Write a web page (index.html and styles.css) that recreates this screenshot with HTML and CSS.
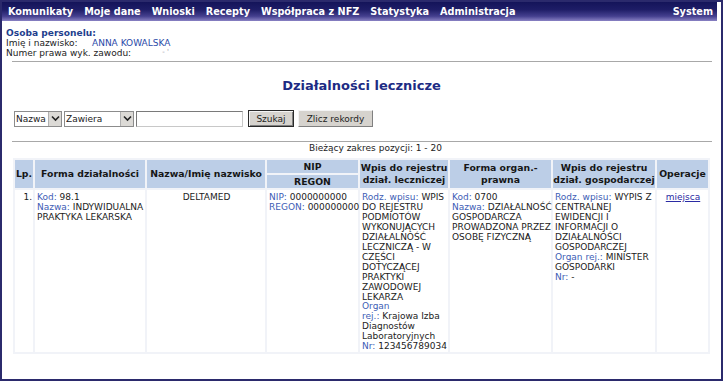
FILE: index.html
```html
<!DOCTYPE html>
<html lang="pl">
<head>
<meta charset="utf-8">
<title>Działalności lecznicze</title>
<link rel="stylesheet" href="styles.css">
</head>
<body>
<div class="frame">
  <nav class="menu">
    <div class="menu-left">
      <a>Komunikaty</a><a>Moje dane</a><a>Wnioski</a><a>Recepty</a><a>Współpraca z NFZ</a><a>Statystyka</a><a>Administracja</a>
    </div>
    <a>System</a>
  </nav>

  <section class="person">
    <div class="person-title">Osoba personelu:</div>
    <div class="person-row"><span class="plabel wide">Imię i nazwisko:</span><span class="pval">ANNA KOWALSKA</span></div>
    <div class="person-row"><span class="plabel">Numer prawa wyk. zawodu:</span><span class="pval faint">- '</span></div>
  </section>

  <hr class="rule">

  <h1 class="title">Działalności lecznicze</h1>

  <form class="search">
    <span class="sel s1"><select><option>Nazwa</option></select><span class="sel-btn"><svg width="9" height="7" viewBox="0 0 9 7"><path d="M1 1.5 L4.5 5 L8 1.5" fill="none" stroke="#222" stroke-width="1.6"/></svg></span></span>
    <span class="sel s2"><select><option>Zawiera</option></select><span class="sel-btn"><svg width="9" height="7" viewBox="0 0 9 7"><path d="M1 1.5 L4.5 5 L8 1.5" fill="none" stroke="#222" stroke-width="1.6"/></svg></span></span>
    <input class="txt" type="text">
    <button type="button" class="btn btn-default">Szukaj</button>
    <button type="button" class="btn btn-count">Zlicz rekordy</button>
  </form>

  <hr class="rule rule2">

  <div class="range">Bieżący zakres pozycji: 1 - 20</div>

  <table class="grid">
    <colgroup>
      <col class="c-lp"><col class="c-forma"><col class="c-nazwa"><col class="c-nip"><col class="c-wl"><col class="c-fo"><col class="c-wg"><col class="c-op">
    </colgroup>
    <thead>
      <tr>
        <th rowspan="2">Lp.</th>
        <th rowspan="2">Forma działalności</th>
        <th rowspan="2">Nazwa/Imię nazwisko</th>
        <th class="sub">NIP</th>
        <th rowspan="2">Wpis do rejestru<br>dział. leczniczej</th>
        <th rowspan="2">Forma organ.-<br>prawna</th>
        <th rowspan="2">Wpis do rejestru<br>dział. gospodarczej</th>
        <th rowspan="2">Operacje</th>
      </tr>
      <tr><th class="sub">REGON</th></tr>
    </thead>
    <tbody>
      <tr>
        <td class="num">1.</td>
        <td><span class="lbl">Kod:</span> 98.1<br><span class="lbl">Nazwa:</span> INDYWIDUALNA<br>PRAKTYKA LEKARSKA</td>
        <td class="center">DELTAMED</td>
        <td><span class="lbl">NIP:</span> 0000000000<br><span class="lbl">REGON:</span> 000000000</td>
        <td><span class="lbl">Rodz. wpisu:</span> WPIS<br>DO REJESTRU<br>PODMIOTÓW<br>WYKONUJĄCYCH<br>DZIAŁALNOŚĆ<br>LECZNICZĄ - W<br>CZĘŚCI<br>DOTYCZĄCEJ<br>PRAKTYKI<br>ZAWODOWEJ<br>LEKARZA<br><span class="lbl">Organ<br>rej.:</span> Krajowa Izba<br>Diagnostów<br>Laboratoryjnych<br><span class="lbl">Nr:</span> 123456789034</td>
        <td><span class="lbl">Kod:</span> 0700<br><span class="lbl">Nazwa:</span> DZIAŁALNOŚĆ<br>GOSPODARCZA<br>PROWADZONA PRZEZ<br>OSOBĘ FIZYCZNĄ</td>
        <td><span class="lbl">Rodz. wpisu:</span> WYPIS Z<br>CENTRALNEJ<br>EWIDENCJI I<br>INFORMACJI O<br>DZIAŁALNOŚCI<br>GOSPODARCZEJ<br><span class="lbl">Organ rej.:</span> MINISTER<br>GOSPODARKI<br><span class="lbl">Nr:</span> -</td>
        <td class="center"><a class="link">miejsca</a></td>
      </tr>
    </tbody>
  </table>
</div>
</body>
</html>
```

FILE: styles.css
```css
html, body {
  margin: 0;
  padding: 0;
  background: #fff;
}

.frame {
  width: 723px;
  height: 381px;
  box-sizing: border-box;
  border: 2px solid #2b2a6c;
  background: #fff;
  font-family: "DejaVu Sans", Verdana, sans-serif;
  color: #222;
  overflow: hidden;
}

/* top menu */
.menu {
  display: flex;
  justify-content: space-between;
  align-items: center;
  height: 19px;
  margin-right: 4px;
  padding: 0 4px 0 6px;
  background: linear-gradient(to bottom, #14145a 0%, #1e1d66 40%, #45408f 75%, #8a82c4 100%);
  color: #fff;
  font-weight: bold;
  font-size: 9.7px;
}
.menu-left {
  display: flex;
  gap: 11px;
}
.menu a {
  color: #fff;
  white-space: nowrap;
}

/* person */
.person {
  margin: 7px 0 0 4px;
  font-size: 9px;
  line-height: 10px;
}
.person-title {
  font-weight: bold;
  font-size: 9.1px;
  color: #1f3f8e;
}
.person-row {
  display: flex;
}
.plabel {
  color: #222;
  white-space: nowrap;
}
.plabel.wide {
  width: 86px;
}
.pval {
  color: #2a4aa8;
}
.pval.faint {
  margin-left: 31px;
  color: #9a9aa8;
  font-size: 7px;
  line-height: 8px;
}

.rule {
  height: 0;
  border: 0;
  border-top: 1px solid #a8a8a8;
  margin: 3px 9px 0 10px;
}
.rule2 {
  margin-top: 14px;
}

.title {
  margin: 16px 0 0 0;
  text-align: center;
  font-size: 13px;
  line-height: 16px;
  font-weight: bold;
  color: #1d2b84;
}

/* search */
.search {
  display: flex;
  align-items: center;
  margin: 16px 0 0 12px;
  height: 17px;
  font-size: 9px;
}
.sel {
  display: flex;
  align-items: stretch;
  height: 16px;
  box-sizing: border-box;
  border: 1px solid #8c8c8c;
  background: #fff;
  margin-right: 2px;
}
.sel select {
  appearance: none;
  -webkit-appearance: none;
  border: 0;
  background: transparent;
  font: inherit;
  color: #222;
  padding: 0 0 0 1px;
  margin: 0;
  flex: 1;
  min-width: 0;
  outline: none;
  text-overflow: clip;
}
.sel-btn {
  width: 12px;
  flex: none;
  display: flex;
  align-items: center;
  justify-content: center;
  background: #dcdad6;
  border-left: 1px solid #b0b0b0;
}
.s1 { width: 48px; }
.s2 { width: 70px; }
.txt {
  width: 107px;
  height: 16px;
  box-sizing: border-box;
  border: 1px solid #7a7a7a;
  border-right-color: #c8c8c8;
  border-bottom-color: #c8c8c8;
  padding: 0;
  margin: 0 5px 0 0;
  font: inherit;
}
.btn {
  height: 17px;
  box-sizing: border-box;
  padding: 0;
  margin: 0 4px 0 0;
  font: inherit;
  color: #222;
  background: #d6d3ce;
  border: 1px solid;
  border-color: #f4f4f4 #808080 #808080 #f4f4f4;
}
.btn-default {
  width: 46px;
  border: 1px solid #2a2a2a;
  box-shadow: inset 1px 1px 0 #f4f4f4, inset -1px -1px 0 #808080;
}
.btn-count { width: 75px; }

.range {
  margin-top: 1px;
  padding-left: 28px;
  text-align: center;
  font-size: 9px;
  line-height: 10px;
}

/* table */
.grid {
  margin: 5px 0 0 11px;
  width: 697px;
  table-layout: fixed;
  border-collapse: separate;
  border-spacing: 2px;
  background: #f1f3f8;
}
.c-lp { width: 18px; }
.c-forma { width: 110px; }
.c-nazwa { width: 118px; }
.c-nip { width: 91px; }
.c-wl { width: 88px; }
.c-fo { width: 101px; }
.c-wg { width: 102px; }
.c-op { width: 51px; }

.grid th {
  background: #bccee7;
  color: #161616;
  font-size: 9.3px;
  line-height: 12px;
  font-weight: bold;
  padding: 0;
  text-align: center;
  white-space: nowrap;
}
.grid th.sub {
  height: 13px;
  line-height: 13px;
}
.grid td {
  background: #fff;
  vertical-align: top;
  font-size: 9px;
  line-height: 9.95px;
  padding: 3px 1px 0 2px;
  white-space: nowrap;
  color: #222;
}
.grid td.num {
  text-align: right;
  padding-right: 1px;
}
.grid td.center {
  text-align: center;
}
.lbl {
  color: #3d5db5;
}
.link {
  color: #2b2ba3;
  text-decoration: underline;
}
```
